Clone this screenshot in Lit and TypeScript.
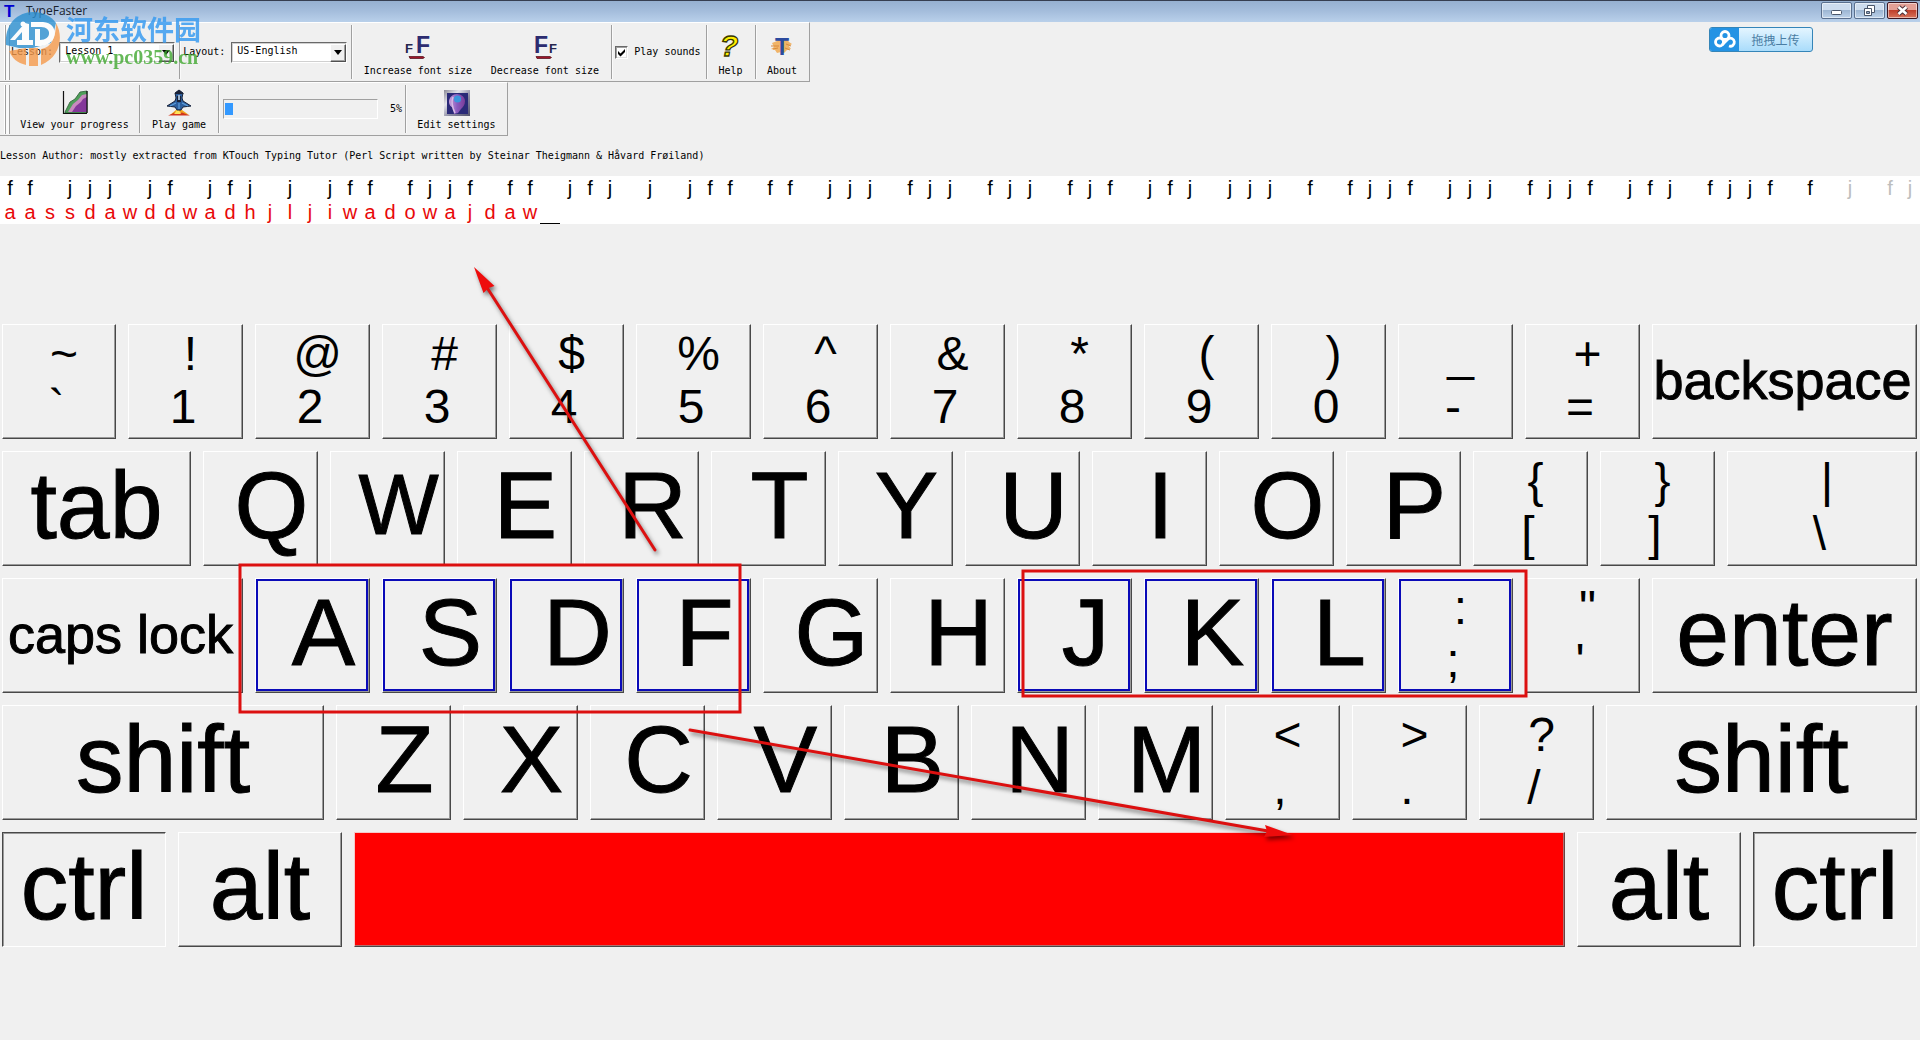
import { LitElement, html, svg, css, nothing, TemplateResult } from "lit";
import { customElement, property } from "lit/decorators.js";
import { classMap } from "lit/directives/class-map.js";
import { styleMap } from "lit/directives/style-map.js";

interface Key {
  w: number;
  label?: string;
  kind?: "letter" | "wide" | "small" | "narrow" | "space";
  top?: string;
  bottom?: string;
  home?: boolean;
  down?: boolean;
}

const UNIT = 115;
const letters = (s: string, home = ""): Key[] =>
  [...s].map((c) => ({ w: UNIT, label: c, kind: c === "W" ? "narrow" : "letter", home: home.includes(c) }));
const pair = (top: string, bottom: string, w = UNIT, home = false): Key => ({ w, top, bottom, home });

const ROWS: Key[][] = [
  [
    pair("~", "`", 114), pair("!", "1"), pair("@", "2"), pair("#", "3"), pair("$", "4"),
    pair("%", "5"), pair("^", "6"), pair("&", "7"), pair("*", "8"), pair("(", "9"),
    pair(")", "0"), pair("_", "-"), pair("+", "="),
    { w: 265, label: "backspace", kind: "small" },
  ],
  [
    { w: 189, label: "tab", kind: "wide" },
    ...letters("QWERTYUIOP"),
    pair("{", "["), pair("}", "]"), pair("|", "\\", 190),
  ],
  [
    { w: 241, label: "caps lock", kind: "small" },
    ...letters("ASDFGHJKL", "ASDFJKL"),
    pair(":", ";", UNIT, true), pair('"', "'"),
    { w: 265, label: "enter", kind: "wide" },
  ],
  [
    { w: 322, label: "shift", kind: "wide" },
    ...letters("ZXCVBNM"),
    pair("<", ","), pair(">", "."), pair("?", "/"),
    { w: 311, label: "shift", kind: "wide" },
  ],
  [
    { w: 164, label: "ctrl", kind: "wide", down: true },
    { w: 164, label: "alt", kind: "wide" },
    { w: 1211, label: "", kind: "space" },
    { w: 164, label: "alt", kind: "wide" },
    { w: 164, label: "ctrl", kind: "wide", down: true },
  ],
];

const LESSON =
  "ff jjj jf jfj j jff fjjf ff jfj j jff ff jjj fjj fjj fjf jfj jjj f fjjf jjj fjjf jfj fjjf f j fj";
const TYPED = "aassdawddwadhjljiwadowajdaw";
const FADE_FROM = 92;

@customElement("key-cap")
export class KeyCap extends LitElement {
  @property({ attribute: false }) key!: Key;

  static styles = css`
    :host { display: block; min-width: 0; }
    .key {
      position: relative;
      display: flex;
      flex-direction: column;
      width: 100%;
      height: 115px;
      margin: 0;
      padding: 0;
      box-sizing: border-box;
      border: 1px solid;
      border-color: #fff #484848 #484848 #fff;
      box-shadow: inset -1px -1px 0 #9a9a9a;
      background: #f0f0f0;
      color: #000;
      font-family: "Liberation Sans", Arial, sans-serif;
      white-space: nowrap;
      text-align: center;
    }
    .down {
      border-color: #484848 #fff #fff #484848;
      box-shadow: inset 1px 1px 0 #9a9a9a;
    }
    .space {
      background: #f00;
      border-color: #f6c8c8 #6b4040 #484848 #f6c8c8;
      box-shadow: inset -1px -1px 0 #b07070;
    }
    .home::before {
      content: "";
      position: absolute;
      inset: 0 1px 1px 0;
      border: 2px solid #0a0ab8;
    }
    .label { line-height: 106px; -webkit-text-stroke: 1px #000; }
    .letter { font-size: 95px; padding-left: 22px; }
    .narrow { font-size: 85px; padding-left: 22px; }
    .wide { font-size: 95px; }
    .small { font-size: 54px; line-height: 110px; padding-right: 4px; }
    .upper, .lower { font-size: 48px; line-height: 53px; }
    .upper { padding: 2px 0 0 10px; }
    .lower { padding-right: 5px; }
  `;

  render() {
    const k = this.key;
    return html`<button
      type="button"
      class=${classMap({ key: true, home: !!k.home, down: !!k.down, space: k.kind === "space" })}
      aria-label=${k.kind === "space" ? "space" : nothing}
    >
      ${k.top
        ? html`<span class="upper">${k.top}</span><span class="lower">${k.bottom}</span>`
        : html`<span class="label ${k.kind}">${k.label}</span>`}
    </button>`;
  }
}

const iconGrow = svg`
  <text x="0" y="19" font-size="13" fill="#26264e">F</text>
  <text x="11" y="19" font-size="23" fill="#2c2c70">F</text>
  <path d="M4 22.500h14l1.500 1-1.500 1H5z" fill="#a01428" stroke="#4a0a14" stroke-width=".7"/>`;
const iconShrink = svg`
  <text x="2" y="19" font-size="23" fill="#2c2c70">F</text>
  <text x="17" y="19" font-size="13" fill="#26264e">F</text>
  <path d="M4 22.500h14l1.500 1-1.500 1H5z" fill="#a01428" stroke="#4a0a14" stroke-width=".7"/>`;
const iconHelp = svg`
  <text x="2" y="22" font-size="30" font-style="italic" fill="#fff000" stroke="#3a3800" stroke-width="1.300">?</text>`;
const iconAbout = svg`
  <path d="M3 9l5-2 2-2 3 2 5-2 2 3 3 2-3 2 2 3-4 1-3 3-3-1-4 1-2-3-4-1 3-2z" fill="#f0b468"/>
  <path d="M2 12h8M4 15l5-1M17 10l5 2M16 14l5 2" stroke="#d98a3c" stroke-width="1"/>
  <text x="6" y="21" font-size="23" fill="#2b4a9e">T</text>`;
const iconChart = svg`
  <path d="M3 22L8 12l5-3 5-7 7-1v22H3z" fill="#4f9e5a" stroke="#2c5a34" stroke-width=".8"/>
  <path d="M6 22l5-8 5-4 4-5 5-1v18z" fill="#c98abf"/>
  <path d="M10 22l4-6 5-4 2-3 4-2v15z" fill="#84389a"/>
  <path d="M1.500 1v22.500H25M25 1v22" fill="none" stroke="#111" stroke-width="1.200"/>`;
const iconShip = svg`
  <path d="M4 25l6-5h6l7 5-6-1-4-2-4 3z" fill="#f0a51c"/>
  <path d="M2 25.500l7-3 3 1 4-1 8 3z" fill="#d2361e"/>
  <path d="M8 24l4-5 3 5z" fill="#ffe45a"/>
  <path d="M13 0l4 3-1 5 1 3 8 5-8 1-2 3h-4l-2-3-8-1 8-5 1-3-1-5z" fill="#2d5f9e" stroke="#17233c" stroke-width="1"/>
  <path d="M9 3l4-3 5 4H9zM11 6h4v6h-4z" fill="#1b2236"/>
  <path d="M12 5h2v5h-2z" fill="#9cb4cf"/>
  <path d="M4 16l6-3M22 16l-6-3M13 13v6" stroke="#5ea0dc" stroke-width="1.200"/>`;
const iconSettings = svg`
  <defs>
    <linearGradient id="frame" x1="0" y1="0" x2="1" y2="1">
      <stop offset="0" stop-color="#8c8c98"/><stop offset=".3" stop-color="#e4e4ea"/>
      <stop offset=".6" stop-color="#8888a0"/><stop offset="1" stop-color="#55556e"/>
    </linearGradient>
    <linearGradient id="face" x1="0" y1="0" x2="1" y2="0">
      <stop offset="0" stop-color="#c9a0dc"/><stop offset=".5" stop-color="#8a5cc0"/><stop offset="1" stop-color="#7a3c98"/>
    </linearGradient>
  </defs>
  <rect width="26" height="26" fill="url(#frame)"/>
  <rect x="3" y="3" width="21" height="21" fill="#2a2a78"/>
  <path d="M5 12c0-5 4-8 8-8s8 3 8 7-2 6-4 8l-3 4-4 1-1-6c-2-1-4-3-4-6z" fill="url(#face)"/>
  <circle cx="13.500" cy="9" r="3.600" fill="#3a96dc"/>
  <path d="M9 7c-2 5-1 10 2 16" fill="none" stroke="#d8bce6" stroke-width="1.500"/>`;

@customElement("app-root")
export class AppRoot extends LitElement {
  static styles = css`
    :host {
      display: block;
      position: relative;
      min-height: 100vh;
      overflow: hidden;
      background: #f0f0f0;
      color: #000;
      font: 10px/12px "DejaVu Sans Mono", "Liberation Mono", monospace;
    }
    button { font: inherit; color: inherit; }
    .titlebar {
      display: flex;
      justify-content: space-between;
      align-items: flex-start;
      height: 22px;
      box-sizing: border-box;
      border-top: 1px solid #363e50;
      background: linear-gradient(#96b0d0, #a3bcdb 45%, #b9d0ea);
    }
    .title {
      display: flex;
      align-items: center;
      gap: 10px;
      height: 20px;
      padding-left: 4px;
      margin: 0;
      font: 12px/20px "Open Sans", "Noto Sans", sans-serif;
      color: #18222e;
    }
    .app-icon { width: 12px; height: 14px; display: block; overflow: visible; }
    .app-icon text { font: bold 17px "Liberation Sans", sans-serif; fill: #0000d2; }
    .window-buttons { display: flex; gap: 2px; padding: 1px 2px 0 0; }
    .window-button {
      display: block;
      width: 31px;
      height: 17px;
      padding: 0;
      border: 1px solid #5a6f8e;
      border-radius: 2px;
      background: linear-gradient(#cddcee 45%, #9db6d3 50%, #bdd2ea);
      box-shadow: inset 0 0 0 1px rgba(255, 255, 255, .5);
    }
    .close {
      border-color: #3d1620;
      background: linear-gradient(#e3a096 45%, #c0402c 50%, #d8745c);
    }
    .window-button svg { display: block; margin: auto; }

    .toolbar { display: flex; flex-direction: column; align-items: flex-start; }
    .bar {
      display: flex;
      box-sizing: border-box;
      border: solid;
      border-width: 1px 1px 1px 0;
      border-color: #fff #a0a0a0 #a0a0a0;
    }
    .main { height: 60px; }
    .second { height: 54px; }
    .grip {
      width: 3px;
      margin: 2px 0 1px 5px;
      border: solid;
      border-width: 0 1px;
      border-color: #a0a0a0;
      background: #fafafa;
      box-shadow: -1px 0 0 #fff;
    }
    .group {
      display: flex;
      align-items: center;
      margin: 2px 0;
      border-left: 1px solid #a0a0a0;
      box-shadow: inset 1px 0 0 #fafafa;
    }
    .group.first { border-left: 0; box-shadow: none; }
    .field { gap: 6px; padding: 0 4px 0 3px; }
    .first.field { padding-left: 1px; }
    .zoomers { padding: 0 3px 0 2px; }
    .sounds { gap: 6px; padding: 0 5px 0 3px; }
    .meter { padding: 0 3px 0 4px; }
    .combo { position: relative; display: block; width: 116px; height: 21px; }
    .combo select {
      appearance: none;
      width: 100%;
      height: 100%;
      box-sizing: border-box;
      margin: 0;
      padding: 0 20px 2px 5px;
      border: 1px solid;
      border-color: #696969 #fff #fff #696969;
      outline: 1px solid #d0d0d0;
      outline-offset: -2px;
      border-radius: 0;
      background: #fff;
      color: #000;
      font: inherit;
    }
    .arrow {
      position: absolute;
      top: 2px;
      right: 1px;
      bottom: 1px;
      width: 16px;
      box-sizing: border-box;
      display: grid;
      place-items: center;
      border: 1px solid;
      border-color: #fff #505050 #505050 #fff;
      box-shadow: inset -1px -1px 0 #a0a0a0;
      background: #f0f0f0;
      pointer-events: none;
    }
    .tool {
      display: flex;
      flex-direction: column;
      align-items: center;
      align-self: stretch;
      padding: 9px 0 0;
      gap: 5px;
      border: 0;
      background: none;
      white-space: nowrap;
    }
    .second .tool { padding-top: 5px; gap: 3px; }
    .tool svg { display: block; width: 26px; height: 26px; overflow: visible; }
    .tool text { font-family: "Liberation Sans", sans-serif; font-weight: bold; }
    .w48 { width: 48px; }
    .w53 { width: 53px; }
    .w78 { width: 78px; }
    .w101 { width: 101px; }
    .w127 { width: 127px; }
    .w129 { width: 129px; }
    .check { display: grid; width: 13px; height: 13px; }
    .check > * { grid-area: 1 / 1; }
    .check input {
      appearance: none;
      margin: 0;
      width: 13px;
      height: 13px;
      border: 1px solid;
      border-color: #696969 #fff #fff #696969;
      background: #fff;
      box-shadow: inset 1px 1px 0 #a0a0a0, inset -1px -1px 0 #e0e0e0;
    }
    .check svg { position: relative; pointer-events: none; visibility: hidden; }
    .check input:checked + svg { visibility: visible; }
    progress {
      appearance: none;
      display: block;
      width: 155px;
      height: 20px;
      box-sizing: border-box;
      padding: 3px 1px;
      border: 1px solid;
      border-color: #a0a0a0 #fff #fff #a0a0a0;
      background: #f0f0f0;
    }
    progress::-webkit-progress-bar { background: #f0f0f0; }
    progress::-webkit-progress-value { background: #3399ff; }
    .percent { width: 24px; text-align: right; }

    .author { margin: 0; padding: 14px 0; white-space: nowrap; }
    .typing {
      display: grid;
      grid-template-columns: repeat(96, minmax(0, 1fr));
      grid-template-rows: 24px 24px;
      background: #fff;
      font: 20px/24px "Liberation Sans", Arial, sans-serif;
      text-align: center;
    }
    .faded { color: #bdbdbd; }
    .typed { color: #e80808; }
    .caret { border-bottom: 1px solid #000; }

    .keyboard {
      display: flex;
      flex-direction: column;
      gap: 12px;
      padding: 100px 3px 60px 2px;
    }
    .row { display: flex; gap: 12px; }
    .row key-cap { flex-basis: 0; }

    .notes { position: absolute; top: 0; left: 0; width: 100%; pointer-events: none; }
    .frame { fill: none; stroke: #dc1010; stroke-width: 3; }
    .shaft { stroke: #dc1010; stroke-width: 3; stroke-linecap: round; }
    .head { fill: #ee0c0c; }
    .pointer { filter: drop-shadow(2px 3px 2px rgba(0, 0, 0, .5)); }

    .upload {
      position: absolute;
      top: 27px;
      right: 107px;
      display: flex;
      width: 104px;
      height: 25px;
      padding: 0;
      box-sizing: border-box;
      border: 1px solid #3585b8;
      border-radius: 3px;
      overflow: hidden;
      background: linear-gradient(#e4f5ff, #a9dcfb);
      color: #4a7da3;
      font: 12px/23px "Noto Sans CJK SC", sans-serif;
    }
    .cloud { width: 29px; height: 23px; background: #2493e4; }
    .upload-text { flex: 1; }

    .watermark {
      position: absolute;
      top: 11px;
      left: 5px;
      display: flex;
      gap: 4px;
      pointer-events: none;
    }
    .logo { width: 57px; height: 56px; opacity: .8; }
    .site { display: flex; flex-direction: column; white-space: nowrap; }
    .name {
      font: 700 27px/36px "Noto Sans CJK SC", sans-serif;
      color: #3a9cf0;
      opacity: .85;
    }
    .url {
      font: bold 20px/20px "Liberation Serif", serif;
      color: #40a830;
      opacity: .8;
    }
  `;

  private tool(label: string, size: string, icon: TemplateResult) {
    return html`<button type="button" class="tool ${size}">
      <svg viewBox="0 0 26 26" aria-hidden="true">${icon}</svg>
      <span>${label}</span>
    </button>`;
  }

  private combo(id: string, value: string) {
    return html`<span class="combo">
      <select id=${id}><option>${value}</option></select>
      <span class="arrow"><svg width="8" height="5"><path d="M0 0h8L4 5z"/></svg></span>
    </span>`;
  }

  render() {
    return html`
      <header class="titlebar">
        <h1 class="title">
          <svg class="app-icon" aria-hidden="true"><text x="0" y="13">T</text></svg>TypeFaster
        </h1>
        <div class="window-buttons">
          <button type="button" class="window-button" aria-label="Minimize">
            <svg width="11" height="15"><rect x=".5" y="7.500" width="10" height="4" rx="1" fill="#fff" stroke="#4a566a"/></svg>
          </button>
          <button type="button" class="window-button" aria-label="Restore">
            <svg width="13" height="15"><path d="M4.500 2.500h7v7h-7z" fill="#fff" stroke="#4a566a"/><path d="M1.500 5.500h7v7h-7z" fill="#fff" stroke="#4a566a"/><path d="M3.500 8.500h3v2h-3z" fill="#8ea6c4" stroke="#4a566a"/></svg>
          </button>
          <button type="button" class="window-button close" aria-label="Close">
            <svg width="13" height="15"><path d="M2.500 4l8 7M10.500 4l-8 7" stroke="#4a3038" stroke-width="4.500"/><path d="M2.500 4l8 7M10.500 4l-8 7" stroke="#fff" stroke-width="2.600"/></svg>
          </button>
        </div>
      </header>

      <div class="toolbar">
        <div class="bar main">
          <div class="grip"></div>
          <div class="group first field"><label for="lesson">Lesson:</label>${this.combo("lesson", "Lesson 1")}</div>
          <div class="group field"><label for="layout">Layout:</label>${this.combo("layout", "US-English")}</div>
          <div class="group zoomers">
            ${this.tool("Increase font size", "w127", iconGrow)}
            ${this.tool("Decrease font size", "w127", iconShrink)}
          </div>
          <div class="group sounds">
            <span class="check">
              <input id="sounds" type="checkbox" checked />
              <svg width="13" height="13"><path d="M3 5l2.500 2.500L10 3v3L5.500 10.500 3 8z"/></svg>
            </span>
            <label for="sounds">Play sounds</label>
          </div>
          <div class="group">${this.tool("Help", "w48", iconHelp)}</div>
          <div class="group">${this.tool("About", "w53", iconAbout)}</div>
        </div>
        <div class="bar second">
          <div class="grip"></div>
          <div class="group first">${this.tool("View your progress", "w129", iconChart)}</div>
          <div class="group">${this.tool("Play game", "w78", iconShip)}</div>
          <div class="group meter">
            <progress id="done" max="100" value="5" aria-label="Lesson progress"></progress>
            <label class="percent" for="done">5%</label>
          </div>
          <div class="group">${this.tool("Edit settings", "w101", iconSettings)}</div>
        </div>
      </div>

      <p class="author">Lesson Author: mostly extracted from KTouch Typing Tutor (Perl Script written by Steinar Theigmann &amp; Håvard Frøiland)</p>

      <div class="typing">
        ${[...LESSON].map((c, i) => html`<span class=${i >= FADE_FROM ? "faded" : "ahead"}>${c}</span>`)}
        ${[...TYPED].map((c) => html`<span class="typed">${c}</span>`)}
        <span class="caret"></span>
      </div>

      <main class="keyboard">
        ${ROWS.map((row) => html`<div class="row">
          ${row.map((k) => html`<key-cap .key=${k} style=${styleMap({ flexGrow: String(k.w) })}></key-cap>`)}
        </div>`)}
      </main>

      <svg class="notes" viewBox="0 0 1920 1040" aria-hidden="true">
        <rect class="frame" x="240" y="565" width="500" height="147"/>
        <rect class="frame" x="1023" y="571" width="503" height="125"/>
        <g class="pointer">
          <path class="shaft" d="M486 286L655 550"/>
          <path class="head" d="M474 267l20.500 19-6 2-5 5z"/>
        </g>
        <g class="pointer">
          <path class="shaft" d="M690 730L1268 831"/>
          <path class="head" d="M1293 835l-29 2 3-6-2-6z"/>
        </g>
      </svg>

      <button type="button" class="upload">
        <svg class="cloud" viewBox="0 0 29 23" aria-hidden="true">
          <g fill="none" stroke="#fff" stroke-width="2.800">
            <circle cx="15" cy="7.500" r="4"/>
            <circle cx="9.500" cy="14" r="4"/>
            <path d="M12 17l6-6a4 4 0 1 1 1 7"/>
          </g>
        </svg>
        <span class="upload-text">拖拽上传</span>
      </button>

      <div class="watermark">
        <svg class="logo" viewBox="0 0 57 56" aria-hidden="true">
          <path d="M1 34C-1 14 12 1 28 1c10 0 18 4 23 11l-5 20-18 5H14z" fill="#2b8fd0"/>
          <path d="M51 12c8 14 4 34-15 42V38c8-1 15-8 15-26z" fill="#f59a4c"/>
          <path d="M4 40l17-3v17C12 52 7 47 4 40z" fill="#f59a4c"/>
          <path d="M24 37h9v18h-9z" fill="#f59a4c"/>
          <path d="M5 29L20 12l4 1v16h4v5H12v-5h5v-8l-7 8z" fill="#fff"/>
          <path d="M26 11h12c17 1 15 23-2 24h-6V18h5v11c12 0 12-13 1-13H26z" fill="#fff"/>
          <circle cx="18" cy="13" r="2.500" fill="#fff"/>
        </svg>
        <div class="site"><span class="name">河东软件园</span><span class="url">www.pc0359.cn</span></div>
      </div>
    `;
  }
}
